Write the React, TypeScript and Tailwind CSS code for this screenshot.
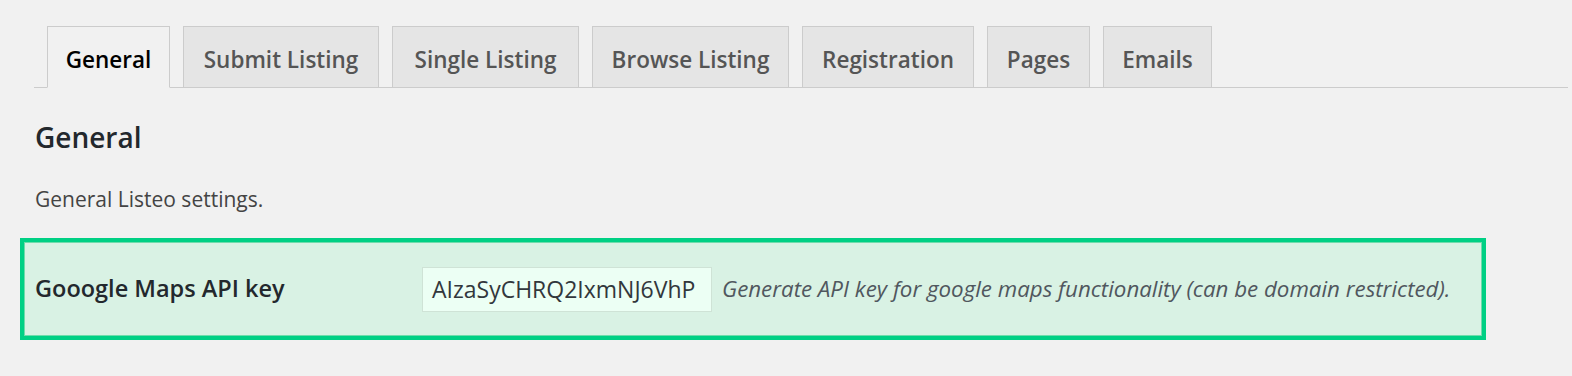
const tabs = [
  { label: "General", width: "w-[123px]", active: true },
  { label: "Submit Listing", width: "w-[196px]" },
  { label: "Single Listing", width: "w-[187px]" },
  { label: "Browse Listing", width: "w-[197px]" },
  { label: "Registration", width: "w-[172px]" },
  { label: "Pages", width: "w-[103px]" },
  { label: "Emails", width: "w-[109px]" },
];

export default function App() {
  return (
    <div
      className="h-[376px] w-full bg-[#f1f1f1] overflow-hidden"
      style={{ fontFamily: '"Open Sans", "Noto Sans", sans-serif' }}
    >
      <div className="pt-[26px] pr-1 pl-[34px]">
        <nav className="flex border-b border-[#cccccc] pl-[13px] gap-[13px]">
          {tabs.map((t) => (
            <div
              key={t.label}
              className={`${t.width} -mb-px h-[62px] pt-[6px] flex items-center justify-center border border-[#cccccc] text-[22.5px] font-semibold leading-none whitespace-nowrap ${
                t.active
                  ? "bg-[#f1f1f1] border-b-[#f1f1f1] text-black"
                  : "bg-[#e5e5e5] text-[#555555]"
              }`}
            >
              {t.label}
            </div>
          ))}
        </nav>
      </div>

      <div className="pl-[35px]">
        <h2 className="mt-[35px] text-[28px] font-semibold leading-none text-[#23282d]">
          General
        </h2>
        <p className="mt-[38px] text-[21px] leading-none text-[#444444]">
          General Listeo settings.
        </p>
      </div>

      <div className="ml-[20px] mt-[28px] w-[1466px] h-[102px] border-4 border-[#00d084] bg-[#d9f2e4] shadow-[inset_0_0_0_1px_#6fdcab] flex items-center">
        <div className="w-[398px] pl-[11px] text-[23.5px] font-semibold text-[#23282d] leading-none">
          Gooogle Maps API key
        </div>
        <div className="w-[290px] h-[45px] border border-[#cfe3d6] bg-[#ecfff4] overflow-hidden flex items-center pl-[9px] text-[23px] text-[#32373c] whitespace-nowrap leading-none">
          AIzaSyCHRQ2IxmNJ6VhP
        </div>
        <p className="ml-[10px] text-[22.3px] italic text-[#50575e] leading-none whitespace-nowrap">
          Generate API key for google maps functionality (can be domain restricted).
        </p>
      </div>
    </div>
  );
}
